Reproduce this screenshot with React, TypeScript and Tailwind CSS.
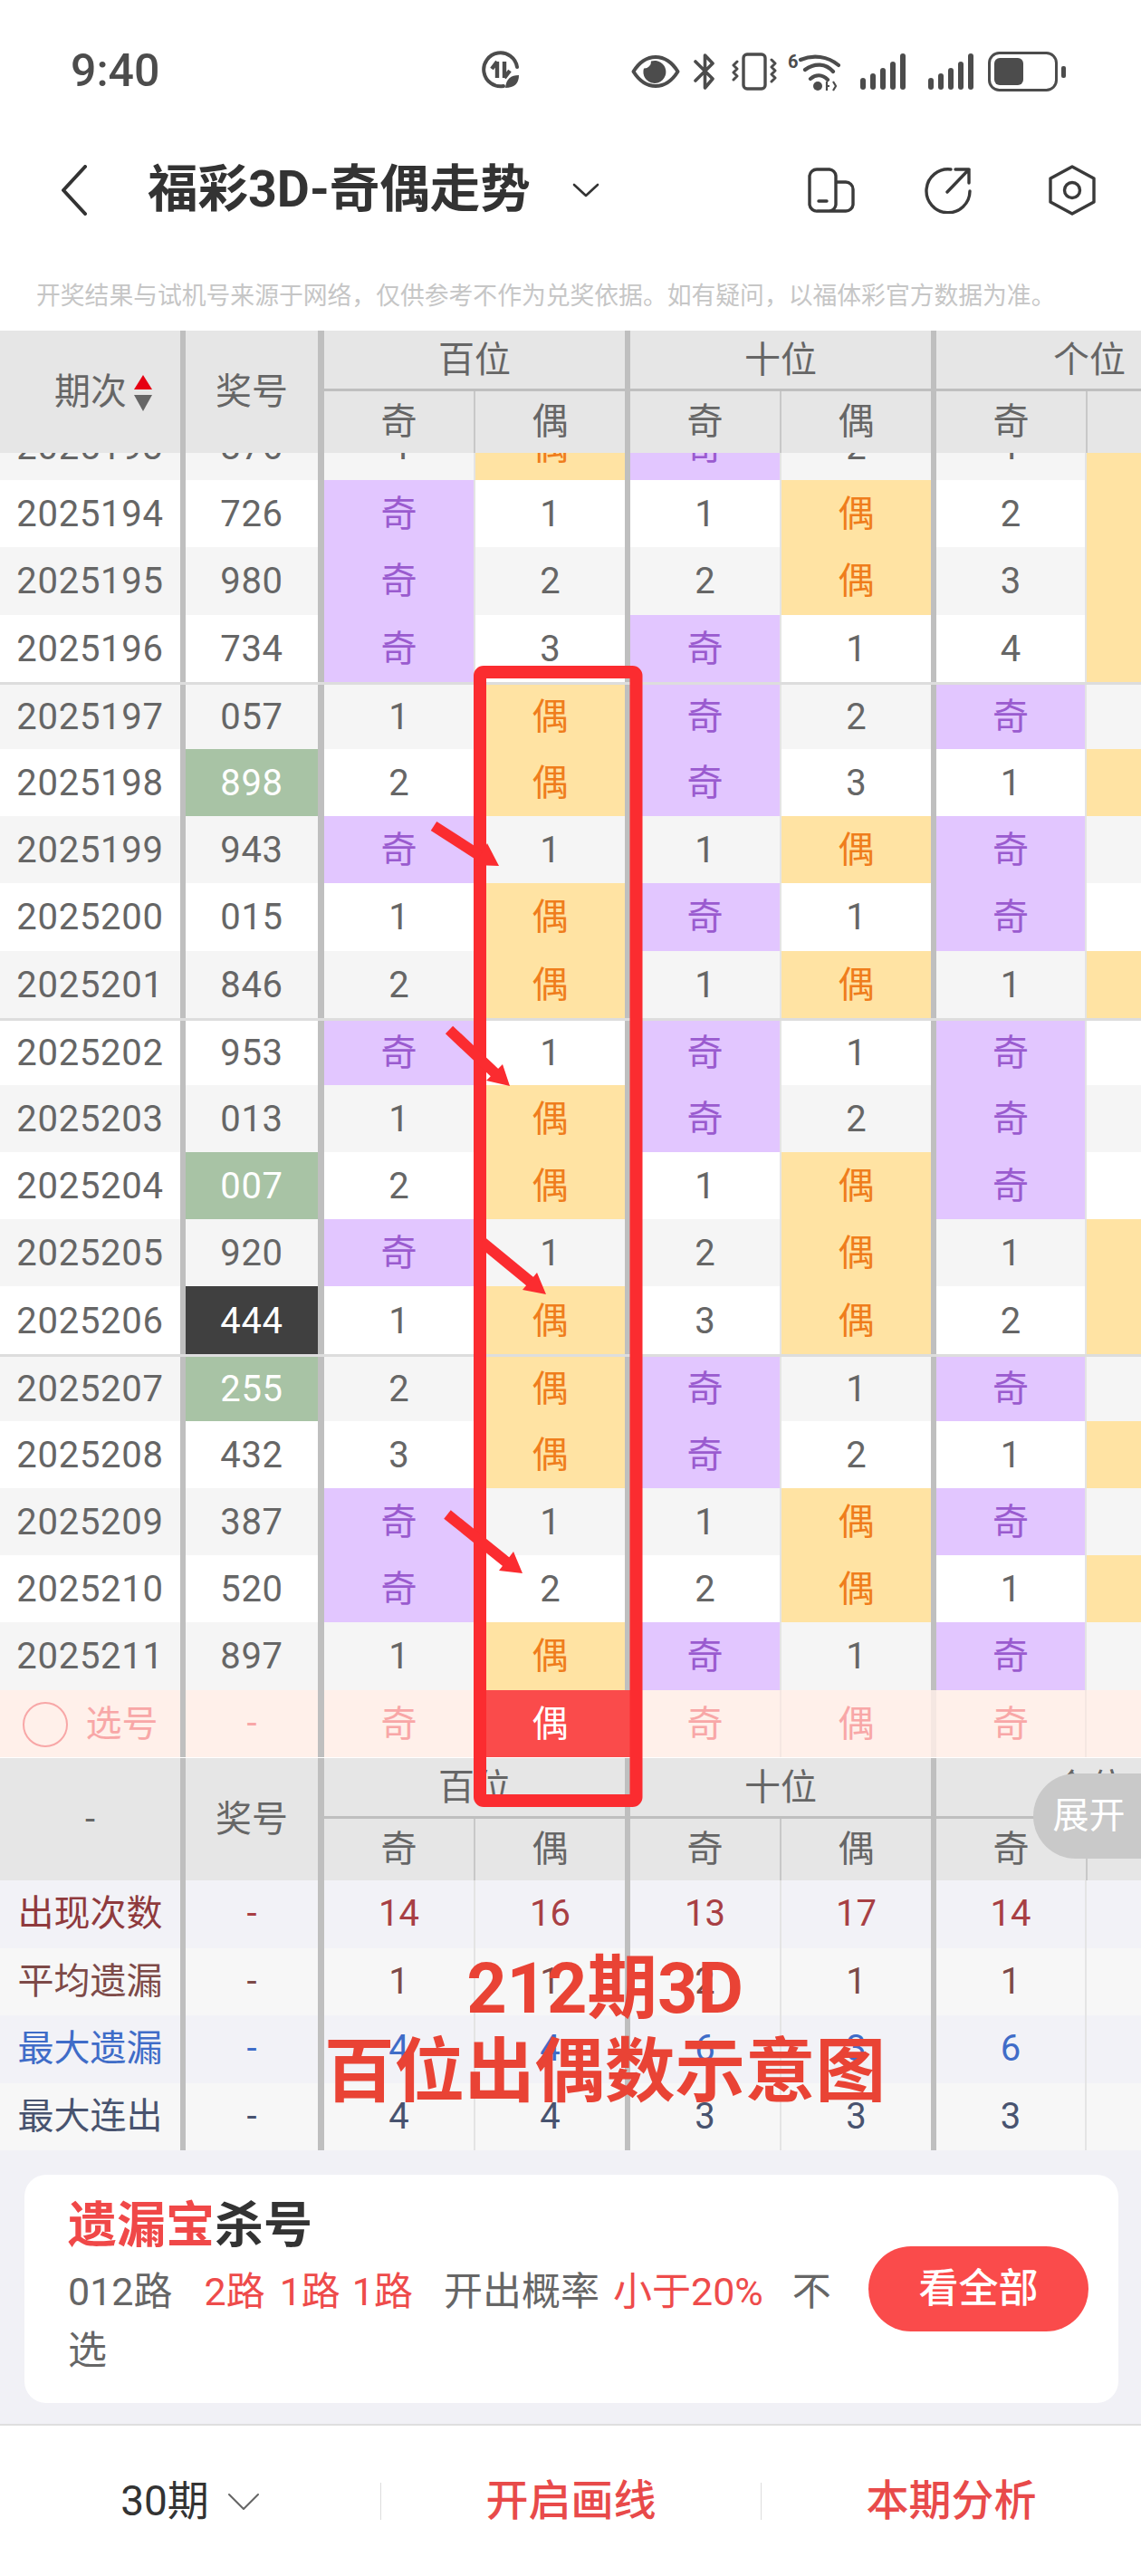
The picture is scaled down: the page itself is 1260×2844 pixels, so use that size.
import type { ReactNode } from "react";

type Row = { no: string; num: string; cells: string[]; hit?: "green" | "dark" };

const r = (no: string, num: string, cells: string, hit?: "green" | "dark"): Row => ({
  no,
  num,
  cells: cells.split(" "),
  hit,
});

const rows: Row[] = [
  r("2025193", "876", "4 偶 奇 2 1 偶"),
  r("2025194", "726", "奇 1 1 偶 2 偶"),
  r("2025195", "980", "奇 2 2 偶 3 偶"),
  r("2025196", "734", "奇 3 奇 1 4 偶"),
  r("2025197", "057", "1 偶 奇 2 奇 1"),
  r("2025198", "898", "2 偶 奇 3 1 偶", "green"),
  r("2025199", "943", "奇 1 1 偶 奇 1"),
  r("2025200", "015", "1 偶 奇 1 奇 2"),
  r("2025201", "846", "2 偶 1 偶 1 偶"),
  r("2025202", "953", "奇 1 奇 1 奇 1"),
  r("2025203", "013", "1 偶 奇 2 奇 2"),
  r("2025204", "007", "2 偶 1 偶 奇 3", "green"),
  r("2025205", "920", "奇 1 2 偶 1 偶"),
  r("2025206", "444", "1 偶 3 偶 2 偶", "dark"),
  r("2025207", "255", "2 偶 奇 1 奇 1", "green"),
  r("2025208", "432", "3 偶 奇 2 1 偶"),
  r("2025209", "387", "奇 1 1 偶 奇 1"),
  r("2025210", "520", "奇 2 2 偶 1 偶"),
  r("2025211", "897", "1 偶 奇 1 奇 1"),
];

const stats = [
  { label: "出现次数", values: ["14", "16", "13", "17", "14", "16"], labelCls: "text-[#8f3a3d]", cls: "text-[#a83f44]", bg: "bg-[#f2f2f7]" },
  { label: "平均遗漏", values: ["1", "1", "2", "1", "1", "1"], labelCls: "text-[#7d4a48]", cls: "text-[#7d4a48]", bg: "bg-[#f7f7f7]" },
  { label: "最大遗漏", values: ["4", "4", "6", "3", "6", "3"], labelCls: "text-[#3f6cc8]", cls: "text-[#3f6cc8]", bg: "bg-[#f2f2f7]" },
  { label: "最大连出", values: ["4", "4", "3", "3", "3", "3"], labelCls: "text-[#48536f]", cls: "text-[#48536f]", bg: "bg-[#f7f7f7]" },
];

// column widths incl. divider, same for every table row
const colCls = [
  "w-[167px] border-r-2 border-[#e4e4e4]",
  "w-[171px] border-r-[6px] border-[#bfbfbf]",
  "w-[167px] border-r-2 border-[#e4e4e4]",
  "w-[171px] border-r-[6px] border-[#bfbfbf]",
  "w-[166px] border-r-2 border-[#e4e4e4]",
  "w-[171px]",
];

function Cell({ v, i }: { v: string; i: number }) {
  let tone = "text-[#666666]";
  if (v === "奇") tone = "bg-[#e2c6ff] text-[#9a5bcf]";
  if (v === "偶") tone = "bg-[#ffe3a3] text-[#ef7d1c]";
  return <div className={`${colCls[i]} ${tone} flex shrink-0 items-center justify-center pt-[2px]`}>{v}</div>;
}

function LeftCols({ a, b, bCls = "" }: { a: ReactNode; b: ReactNode; bCls?: string }) {
  return (
    <>
      <div className="flex w-[205px] shrink-0 items-center justify-center border-r-[6px] border-[#bfbfbf]">{a}</div>
      <div className={`flex w-[153px] shrink-0 items-center justify-center border-r-[7px] border-[#bfbfbf] ${bCls}`}>{b}</div>
    </>
  );
}

function TableHead({ first }: { first: ReactNode }) {
  return (
    <div className="flex h-[135px] bg-[#e6e6e6] text-[#666666]">
      <LeftCols a={first} b="奖号" />
      {["百位", "十位", "个位"].map((g, gi) => (
        <div key={g} className="w-[338px] shrink-0">
          <div className={`flex h-[67px] items-center justify-center border-b-[3px] border-[#bfbfbf] pt-[2px] ${gi < 2 ? "border-r-[6px]" : ""}`}>{g}</div>
          <div className="flex h-[68px]">
            {["奇", "偶"].map((s, si) => (
              <div
                key={s}
                className={`flex shrink-0 items-center justify-center ${si === 0 ? "w-[167px] border-r-2 border-[#c8c8c8]" : `w-[171px] border-[#bfbfbf] ${gi < 2 ? "border-r-[6px]" : ""}`}`}
              >
                {s}
              </div>
            ))}
          </div>
        </div>
      ))}
    </div>
  );
}

function StatusIcons() {
  return (
    <div className="flex items-center text-[#4c4c4c]">
      <svg width="54" height="38" viewBox="0 0 54 38" fill="none" className="ml-[8px]">
        <path d="M2.5 19 C10 7 19 3 27 3 C35 3 44 7 51.5 19 C44 31 35 35 27 35 C19 35 10 31 2.5 19Z" stroke="#4c4c4c" strokeWidth="4" strokeLinejoin="round" />
        <path d="M22 7.5 a12.5 12.5 0 1 1 -8 8 a7.5 7.5 0 0 0 8 -8Z" fill="#4c4c4c" />
        <circle cx="26" cy="14" r="3" fill="#4c4c4c" />
      </svg>
      <svg width="26" height="42" viewBox="0 0 26 42" fill="none" className="ml-[15px]">
        <path d="M2 10 L21 29 L12.5 39 V3 L21 12 L2 31" stroke="#4c4c4c" strokeWidth="3.6" strokeLinecap="round" strokeLinejoin="round" />
      </svg>
      <svg width="50" height="42" viewBox="0 0 50 42" fill="none" className="ml-[16px]">
        <rect x="13" y="2" width="24" height="38" rx="4" stroke="#4c4c4c" strokeWidth="3.4" />
        <path d="M6 10 L2 14 L6 18 L2 22 L6 26 L2 30 M44 8 L48 12 L44 16 L48 20 L44 24 L48 28 L44 32" stroke="#4c4c4c" strokeWidth="3" strokeLinecap="round" strokeLinejoin="round" />
      </svg>
      <svg width="58" height="44" viewBox="0 0 58 44" fill="none" className="ml-[12px]">
        <text x="0" y="18" fontSize="20" fontWeight="700" fill="#4c4c4c" fontFamily="Roboto, sans-serif">6</text>
        <path d="M14 9 C28 3 44 5 56 15 M19 20 C30 12 42 13 50 22 M25 30 C31 25 38 25 44 31" stroke="#4c4c4c" strokeWidth="4.2" strokeLinecap="round" />
        <circle cx="33" cy="38" r="5" fill="#4c4c4c" />
        <path d="M43 33 V43 M42 38 L46 38 M50 33 L53 38 L50 43" stroke="#4c4c4c" strokeWidth="2.2" />
      </svg>
      {[0, 1].map((k) => (
        <svg key={k} width="51" height="42" viewBox="0 0 51 42" fill="#4c4c4c" className={k === 0 ? "ml-[22px]" : "ml-[24px]"}>
          <rect x="0" y="28" width="6" height="13" rx="3" />
          <rect x="11" y="23" width="6" height="18" rx="3" />
          <rect x="22" y="17" width="6" height="24" rx="3" />
          <rect x="33" y="10" width="6" height="31" rx="3" />
          <rect x="44" y="1" width="6" height="40" rx="3" />
        </svg>
      ))}
      <svg width="87" height="44" viewBox="0 0 87 44" fill="none" className="ml-[15px]">
        <rect x="1.5" y="1.5" width="74" height="41" rx="11" stroke="#4c4c4c" strokeWidth="3" />
        <rect x="7" y="7" width="32" height="30" rx="6" fill="#4c4c4c" />
        <rect x="81" y="16" width="5" height="13" rx="2" fill="#4c4c4c" />
      </svg>
    </div>
  );
}

function Annotation() {
  const red = "#fb2c30";
  const arrow = (x1: number, y1: number, x2: number, y2: number, head: string) => (
    <>
      <line x1={x1} y1={y1} x2={x2} y2={y2} stroke={red} strokeWidth="12" />
      <polygon points={head} fill={red} />
    </>
  );
  return (
    <svg width="1260" height="2844" viewBox="0 0 1260 2844" fill="none" className="pointer-events-none absolute left-0 top-0">
      <rect x="530" y="742" width="172.5" height="1246" rx="4" stroke={red} strokeWidth="14" />
      {arrow(479, 912, 538, 950, "551,956 538,931 524,955")}
      {arrow(496, 1137, 548, 1186, "563,1199 555,1175 537,1193")}
      {arrow(532, 1371, 588, 1417, "603,1429 593,1405 577,1424")}
      {arrow(494, 1672, 561, 1726, "577,1737 567,1713 551,1734")}
    </svg>
  );
}

export default function App() {
  return (
    <div className="relative h-[2844px] w-[1260px] overflow-hidden bg-white font-['Roboto','Noto_Sans_CJK_SC',sans-serif] text-[40px]">
      {/* status bar */}
      <div className="flex h-[120px] items-start pl-[78px] pt-[48px]">
        <span className="w-[454px] text-[50px] font-medium leading-[60px] text-[#4c4c4c]">9:40</span>
        <svg width="42" height="42" viewBox="0 0 42 42" fill="none" className="mt-[8px]">
          <path d="M24 39 A18.5 18.5 0 1 1 39 18" stroke="#4c4c4c" strokeWidth="4" strokeLinecap="round" />
          <path d="M17 12 V30 M17 12 L11 20 M25 12 V30 M25 30 L31 22" stroke="#4c4c4c" strokeWidth="4.4" />
          <path d="M26 41 C27 31 32 27 41 27 C41 36 36 41 26 41Z" fill="#4c4c4c" />
        </svg>
        <div className="ml-[115px] mt-[9px]">
          <StatusIcons />
        </div>
      </div>

      {/* title */}
      <div className="flex h-[180px] items-center">
        <svg width="30" height="56" viewBox="0 0 30 56" fill="none" className="ml-[67px]">
          <path d="M27 2 L3 28 L27 54" stroke="#333333" strokeWidth="4" strokeLinecap="round" strokeLinejoin="round" />
        </svg>
        <h1 className="ml-[66px] w-[469px] whitespace-nowrap text-[55.5px] font-bold leading-none text-[#333333]">福彩3D-奇偶走势</h1>
        <svg width="30" height="16" viewBox="0 0 30 16" fill="none">
          <path d="M2 2 L15 14 L28 2" stroke="#333333" strokeWidth="2.6" strokeLinecap="round" strokeLinejoin="round" />
        </svg>
        <svg width="52" height="50" viewBox="0 0 52 50" fill="none" className="ml-[230px]">
          <path d="M31 16 H42 A8 8 0 0 1 50 24 V41 A8 8 0 0 1 42 48 H11 A8 8 0 0 1 2 41 V9 A8 8 0 0 1 10 2 H24 A8 8 0 0 1 31 9 V41 A8 8 0 0 1 24 48" stroke="#3a3a3a" strokeWidth="3.4" strokeLinejoin="round" />
          <path d="M12 37 H21" stroke="#3a3a3a" strokeWidth="3.4" strokeLinecap="round" />
        </svg>
        <svg width="52" height="52" viewBox="0 0 52 52" fill="none" className="ml-[77px]">
          <path d="M29 3 A24 24 0 1 0 50 27 M34 3 H49 V18 M49 3 L25 28" stroke="#3a3a3a" strokeWidth="3.4" strokeLinecap="round" strokeLinejoin="round" />
        </svg>
        <svg width="52" height="56" viewBox="0 0 52 56" fill="none" className="ml-[85px]">
          <path d="M26 2 L50 15 V41 L26 54 L2 41 V15 Z" stroke="#3a3a3a" strokeWidth="3.4" strokeLinejoin="round" />
          <circle cx="26" cy="28" r="8.5" stroke="#3a3a3a" strokeWidth="3.4" />
        </svg>
      </div>

      {/* notice */}
      <div className="h-[65px] pl-[40px] pt-[10px] text-[26.8px] leading-[34px] text-[#c6c6c6] whitespace-nowrap">
        开奖结果与试机号来源于网络，仅供参考不作为兑奖依据。如有疑问，以福体彩官方数据为准。
      </div>

      <TableHead
        first={
          <div className="flex items-center gap-[8px] pl-[29px]">
            <span>期次</span>
            <svg width="20" height="40" viewBox="0 0 20 40" className="mt-[2px]">
              <polygon points="10,0 20,16 0,16" fill="#e60012" />
              <polygon points="0,22 20,22 10,40" fill="#666666" />
            </svg>
          </div>
        }
      />

      {/* rows scrolled under the sticky head */}
      <div className="h-[1441px] overflow-hidden">
        <div className="-mt-[44px]">
          {rows.map((row, i) => (
            <div
              key={row.no}
              className={`flex h-[74.2px] ${i % 2 === 0 ? "bg-[#f5f5f5]" : "bg-white"} ${i % 5 === 4 ? "border-t-[3px] border-[#dddddd]" : ""}`}
            >
              <LeftCols
                a={<span className="mt-[2px] tracking-[0.7px] text-[#666666]">{row.no}</span>}
                b={<span className="mt-[2px] tracking-[0.7px]">{row.num}</span>}
                bCls={row.hit === "green" ? "bg-[#a8c3a5] text-white" : row.hit === "dark" ? "bg-[#404040] text-white" : "text-[#666666]"}
              />
              {row.cells.map((c, j) => (
                <Cell key={j} v={c} i={j} />
              ))}
            </div>
          ))}
          {/* pick row */}
          <div className="flex h-[74.2px] bg-[#fff0ea] text-[#f8a7a7]">
            <LeftCols
              a={
                <div className="flex items-center gap-[20px] pt-[2px]">
                  <span className="h-[50px] w-[50px] rounded-full border-2 border-[#f8a7a7]" />
                  <span>选号</span>
                </div>
              }
              b="-"
            />
            {["奇", "偶", "奇", "偶", "奇", "偶"].map((c, j) => (
              <div key={j} className={`${colCls[j]} flex shrink-0 items-center justify-center pt-[2px] ${j === 1 ? "border-[#fa4b4b] bg-[#fa4b4b] text-white" : "border-[#f5e7e2]"}`}>
                {c}
              </div>
            ))}
          </div>
        </div>
      </div>

      <TableHead first="-" />

      {stats.map((s) => (
        <div key={s.label} className={`flex h-[74.5px] ${s.bg}`}>
          <LeftCols a={<span className={s.labelCls}>{s.label}</span>} b={<span className={s.cls}>-</span>} />
          {s.values.map((v, j) => (
            <div key={j} className={`${colCls[j]} ${s.cls} flex shrink-0 items-center justify-center`}>
              {v}
            </div>
          ))}
        </div>
      ))}

      {/* kill number card */}
      <div className="h-[304px] border-b-2 border-[#dedede] bg-[#f1f1f6] px-[27px] pt-[27px]">
        <div className="flex h-[252px] w-[1208px] items-start rounded-[24px] bg-white pl-[48px]">
          <div className="w-[884px]">
            <div className="pt-[23px] text-[54px] font-bold leading-[68px] text-[#333333]">
              <span className="text-[#f04848]">遗漏宝</span>杀号
            </div>
            <div className="mt-[6px] w-[860px] text-[43px] leading-[65px] text-[#666666]">
              <span>012路</span>
              <span className="ml-[35px] text-[#ee4b4b]">2路</span>
              <span className="ml-[16px] text-[#ee4b4b]">1路</span>
              <span className="ml-[13px] text-[#ee4b4b]">1路</span>
              <span className="ml-[34px]">开出概率</span>
              <span className="ml-[15px] text-[#ee4b4b]">小于20%</span>
              <span className="ml-[32px]">不</span>
              <span>选</span>
            </div>
          </div>
          <button className="mt-[79px] flex h-[94px] w-[243px] shrink-0 items-center justify-center rounded-full bg-[#fa4b4b] text-[44px] font-medium text-white">
            看全部
          </button>
        </div>
      </div>

      {/* bottom bar */}
      <div className="flex h-[167px] items-center bg-white">
        <div className="flex w-[420px] items-center justify-center gap-[20px] text-[46px] text-[#333333]">
          <span>30期</span>
          <svg width="36" height="20" viewBox="0 0 36 20" fill="none">
            <path d="M2 2 L18 18 L34 2" stroke="#666666" strokeWidth="2" strokeLinecap="round" strokeLinejoin="round" />
          </svg>
        </div>
        <div className="h-[41px] w-px bg-[#dddddd]" />
        <div className="w-[419px] text-center text-[47px] font-medium text-[#e84a4a]">开启画线</div>
        <div className="h-[41px] w-px bg-[#dddddd]" />
        <div className="w-[419px] text-center text-[47px] font-medium text-[#e84a4a]">本期分析</div>
      </div>

      {/* expand tab */}
      <div className="absolute right-0 top-[1958px] flex h-[94px] w-[119px] items-center justify-center rounded-l-[47px] bg-[#c9c9c9] pl-[4px] text-white">
        展开
      </div>

      <Annotation />

      {/* image caption */}
      <div className="absolute left-[356px] top-[2150px] w-[624px] text-center text-[77.5px] font-bold leading-[92px] text-[#e94335]">
        <div>212期3D</div>
        <div className="whitespace-nowrap">百位出偶数示意图</div>
      </div>
    </div>
  );
}
